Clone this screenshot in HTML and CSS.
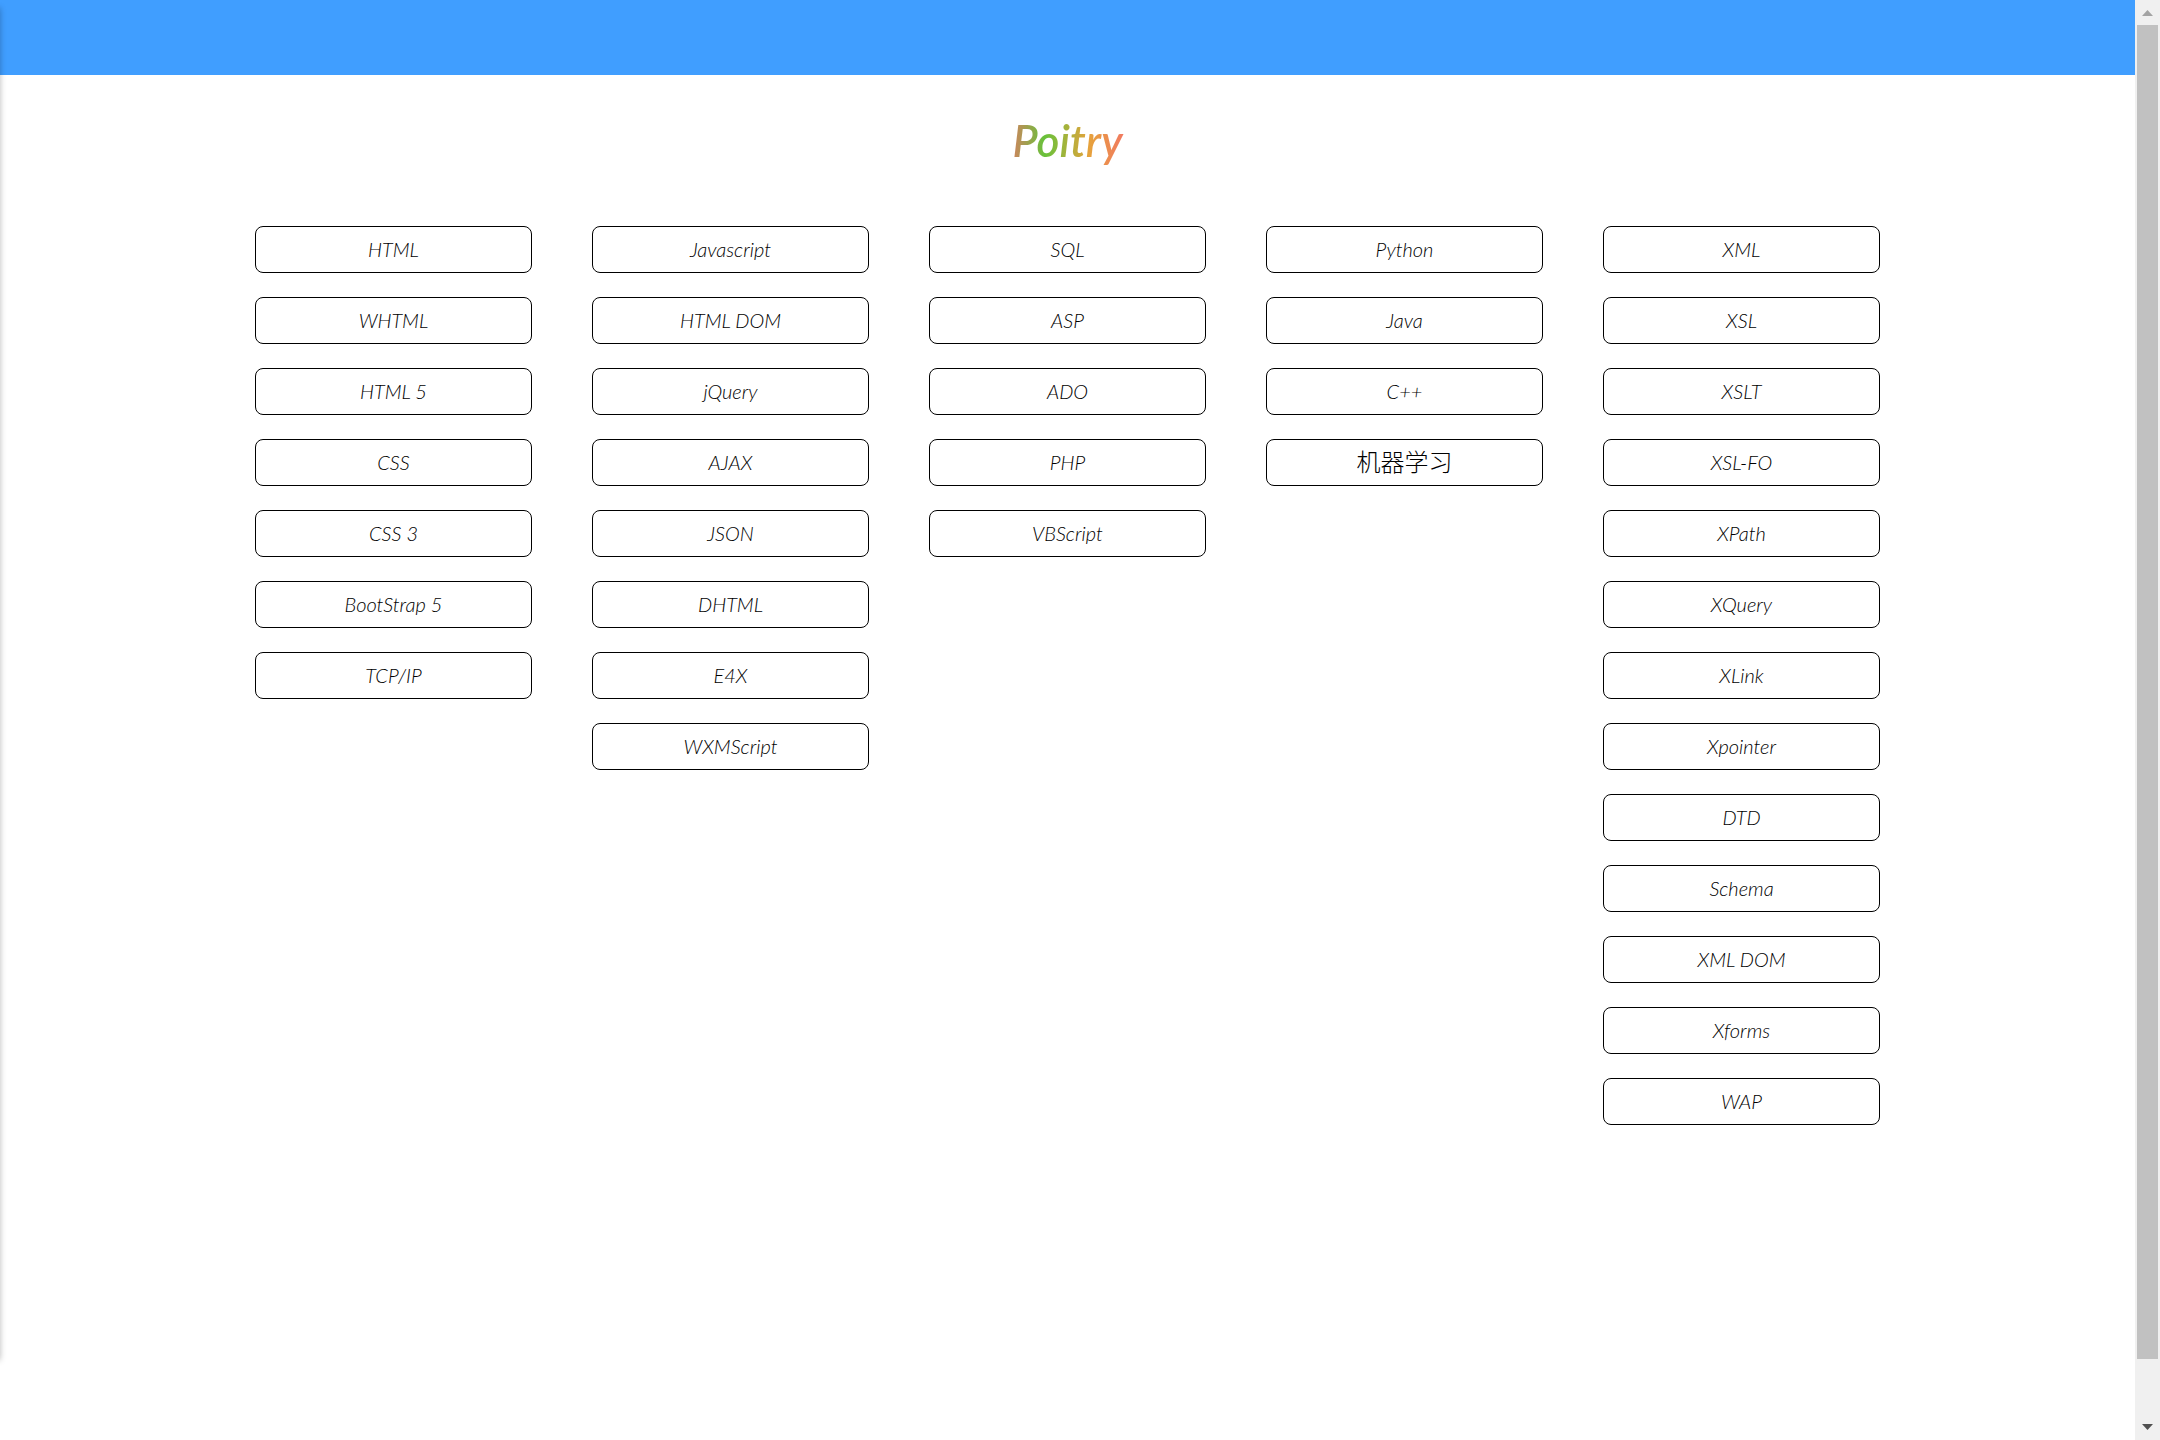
FILE: index.html
```html
<!DOCTYPE html>
<html lang="zh-CN">
<head>
<meta charset="utf-8">
<title>Poitry</title>
<link rel="stylesheet" href="styles.css">
</head>
<body>
<div class="page">
  <header class="topbar"></header>
  <main class="content">
    <h1 class="brand"><span class="brand-text">Poitry</span></h1>
    <nav class="topics">
      <div class="topic-column">
        <button class="topic">HTML</button>
        <button class="topic">WHTML</button>
        <button class="topic">HTML 5</button>
        <button class="topic">CSS</button>
        <button class="topic">CSS 3</button>
        <button class="topic">BootStrap 5</button>
        <button class="topic">TCP/IP</button>
      </div>
      <div class="topic-column">
        <button class="topic">Javascript</button>
        <button class="topic">HTML DOM</button>
        <button class="topic">jQuery</button>
        <button class="topic">AJAX</button>
        <button class="topic">JSON</button>
        <button class="topic">DHTML</button>
        <button class="topic">E4X</button>
        <button class="topic">WXMScript</button>
      </div>
      <div class="topic-column">
        <button class="topic">SQL</button>
        <button class="topic">ASP</button>
        <button class="topic">ADO</button>
        <button class="topic">PHP</button>
        <button class="topic">VBScript</button>
      </div>
      <div class="topic-column">
        <button class="topic">Python</button>
        <button class="topic">Java</button>
        <button class="topic">C++</button>
        <button class="topic topic-cjk">机器学习</button>
      </div>
      <div class="topic-column">
        <button class="topic">XML</button>
        <button class="topic">XSL</button>
        <button class="topic">XSLT</button>
        <button class="topic">XSL-FO</button>
        <button class="topic">XPath</button>
        <button class="topic">XQuery</button>
        <button class="topic">XLink</button>
        <button class="topic">Xpointer</button>
        <button class="topic">DTD</button>
        <button class="topic">Schema</button>
        <button class="topic">XML DOM</button>
        <button class="topic">Xforms</button>
        <button class="topic">WAP</button>
      </div>
    </nav>
  </main>
</div>
<div class="drawer-edge"></div>
<div class="scrollbar" aria-hidden="true">
  <svg class="scroll-arrow" viewBox="0 0 25 25"><path fill="#a3a3a3" d="M7 16 12.500 10 18 16z"/></svg>
  <div class="scroll-track"><div class="scroll-thumb"></div></div>
  <svg class="scroll-arrow" viewBox="0 0 25 25"><path fill="#505050" d="M7 9h11l-5.500 6z"/></svg>
</div>
</body>
</html>
```
FILE: styles.css
```css
* {
  box-sizing: border-box;
}

body {
  margin: 0;
  background: #fff;
  color: #000;
  font-family: Lato, "Noto Sans CJK SC", sans-serif;
}

.page {
  min-height: 100vh;
  padding-right: 25px;
}

.topbar {
  height: 75px;
  background: #409eff;
}

.content {
  padding: 40px 255px;
}

.brand {
  margin: 0 0 61px;
  font-size: 44px;
  font-style: italic;
  font-weight: 600;
  line-height: 50px;
  text-align: center;
}

.brand-text {
  padding: 0 12px;
  background: linear-gradient(to right, #f56c6c, #67c23a 33%, #e6a23c 66%, #f56c6c);
  background-clip: text;
  -webkit-background-clip: text;
  color: transparent;
}

.topics {
  display: grid;
  grid-template-columns: repeat(5, 1fr);
  gap: 60px;
}

.topic-column {
  display: flex;
  flex-direction: column;
  gap: 24px;
}

.topic {
  height: 47px;
  padding: 0 0 2px;
  border: 1px solid #000;
  border-radius: 8px;
  background: #fff;
  color: #000;
  font-family: inherit;
  font-size: 20px;
  font-style: italic;
  font-weight: 300;
  line-height: 24px;
  cursor: pointer;
}

.topic-cjk {
  font-size: 24px;
  font-style: normal;
}

.drawer-edge {
  position: fixed;
  top: 8px;
  bottom: 80px;
  left: -20px;
  width: 20px;
  box-shadow: 0 0 6px rgba(0, 0, 0, 0.28);
}

.scrollbar {
  position: fixed;
  top: 0;
  right: 0;
  bottom: 0;
  display: flex;
  flex-direction: column;
  width: 25px;
  background: #f0f0f0;
}

.scroll-arrow {
  width: 25px;
  height: 25px;
}

.scroll-track {
  flex: 1;
  padding: 0 2px;
}

.scroll-thumb {
  height: 96%;
  background: #c1c1c1;
}
```
